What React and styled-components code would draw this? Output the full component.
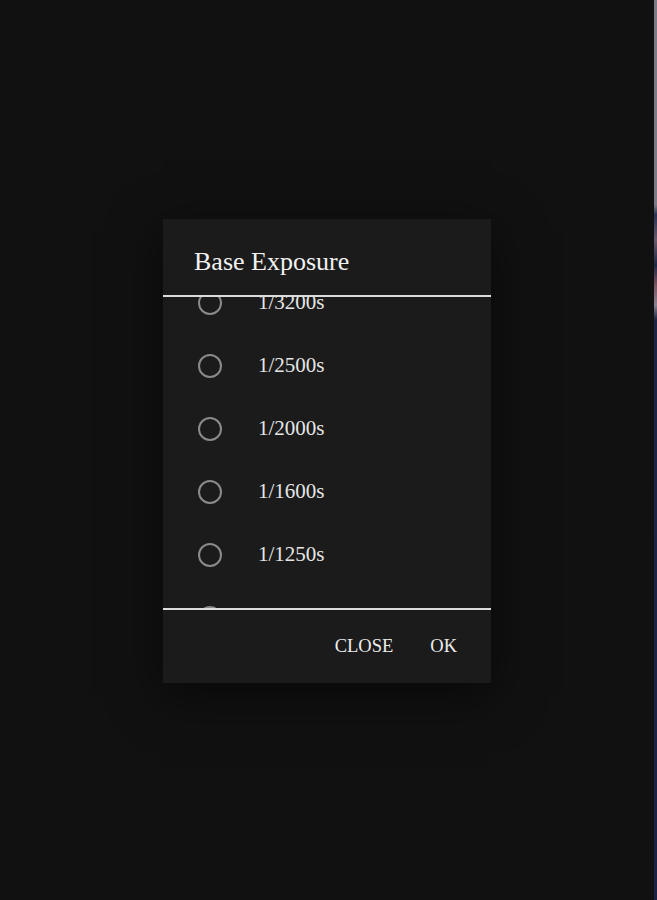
import { useLayoutEffect, useRef } from "react"
import styled, { createGlobalStyle } from "styled-components"

const GlobalStyle = createGlobalStyle`
  html, body {
    margin: 0;
    padding: 0;
    background: #111111;
  }
`;

const ROW = 63;

const exposures = [
  "1/8000s", "1/6400s", "1/5000s", "1/4000s", "1/3200s", "1/2500s",
  "1/2000s", "1/1600s", "1/1250s", "1/1000s", "1/800s", "1/640s",
  "1/500s", "1/400s", "1/320s", "1/250s", "1/200s", "1/160s",
  "1/125s", "1/100s", "1/80s", "1/60s", "1/50s", "1/40s", "1/30s",
];

const Page = styled.div`
  display: flex;
  height: 900px;
  background: #111111;
`;

const Stage = styled.div`
  flex: 1;
  display: flex;
  align-items: center;
  justify-content: center;
  padding-top: 2px;
`;

const Edge = styled.div`
  width: 3px;
  background: linear-gradient(
    to bottom,
    #7c7c86 0px,
    #7c7c86 205px,
    #2a3356 215px,
    #6b5a6a 240px,
    #1e2748 265px,
    #7a5460 285px,
    #8a8290 305px,
    #1d2444 320px,
    #1a2142 900px
  );
`;

const Dialog = styled.div`
  width: 328px;
  background: #1b1b1b;
  box-shadow: 0 12px 48px rgba(0, 0, 0, 0.55);
  font-family: "Liberation Serif", "Times New Roman", serif;
  color: #ececec;
  display: flex;
  flex-direction: column;
`;

const Header = styled.div`
  height: 78px;
  box-sizing: border-box;
  padding: 27px 31px 0;
  border-bottom: 2px solid #dcdcdc;
`;

const Title = styled.h2`
  margin: 0;
  font-size: 26px;
  font-weight: 400;
  line-height: 1.2;
  color: #f2f2f2;
`;

const List = styled.div`
  height: 311px;
  overflow-y: auto;
  scrollbar-width: none;
  &::-webkit-scrollbar {
    display: none;
  }
`;

const Row = styled.label`
  display: flex;
  align-items: center;
  height: ${ROW}px;
  padding-left: 35px;
  gap: 36px;
  cursor: pointer;
`;

const Radio = styled.span`
  width: 24px;
  height: 24px;
  box-sizing: border-box;
  border-radius: 50%;
  border: 2px solid ${p => (p.$checked ? "#9ec1ff" : "#8a8a8a")};
  flex-shrink: 0;
`;

const OptionText = styled.span`
  font-size: 21px;
  color: #e6e6e6;
`;

const Footer = styled.div`
  height: 75px;
  box-sizing: border-box;
  border-top: 2px solid #dcdcdc;
  display: flex;
  align-items: center;
  justify-content: flex-end;
  gap: 21px;
  padding-right: 26px;
`;

const Button = styled.button`
  background: none;
  border: none;
  padding: 6px 8px;
  font-family: "Liberation Serif", "Times New Roman", serif;
  font-size: 18.5px;
  color: #ececec;
  cursor: pointer;
`;

const App = () => {
  const listRef = useRef(null);

  useLayoutEffect(() => {
    if (listRef.current) {
      listRef.current.scrollTop = exposures.indexOf("1/3200s") * ROW + 26;
    }
  }, []);

  return (
    <Page>
      <GlobalStyle />
      <Stage>
        <Dialog>
          <Header>
            <Title>Base Exposure</Title>
          </Header>
          <List ref={listRef}>
            {exposures.map(v => (
              <Row key={v}>
                <Radio />
                <OptionText>{v}</OptionText>
              </Row>
            ))}
          </List>
          <Footer>
            <Button>CLOSE</Button>
            <Button>OK</Button>
          </Footer>
        </Dialog>
      </Stage>
      <Edge />
    </Page>
  )
}

export default App
